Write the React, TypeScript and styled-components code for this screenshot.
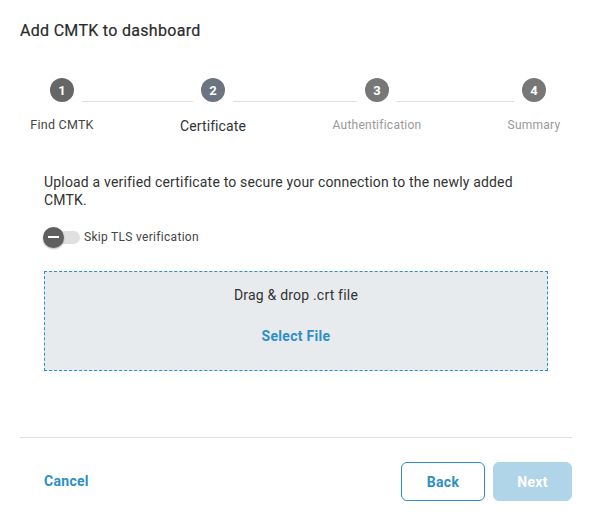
import React from 'react'
import styled, { createGlobalStyle } from 'styled-components'

const GlobalStyle = createGlobalStyle`
  body {
    margin: 0;
    background: #ffffff;
    font-family: Roboto, "Liberation Sans", sans-serif;
    color: #333333;
  }
`

const steps = [
  { num: 1, label: 'Find CMTK', state: 'done' },
  { num: 2, label: 'Certificate', state: 'active' },
  { num: 3, label: 'Authentification', state: 'todo' },
  { num: 4, label: 'Summary', state: 'todo' },
]

export default function App() {
  return (
    <Dialog>
      <GlobalStyle />
      <Title>Add CMTK to dashboard</Title>

      <Stepper>
        {steps.map((s, i) => (
          <React.Fragment key={s.num}>
            <Circle state={s.state}>{s.num}</Circle>
            {i < steps.length - 1 && <Connector />}
          </React.Fragment>
        ))}
        {steps.map((s, i) => (
          <LabelCell key={s.label} style={{ gridColumn: i * 2 + 1 }}>
            <StepLabel state={s.state}>{s.label}</StepLabel>
          </LabelCell>
        ))}
      </Stepper>

      <Body>
        <Intro>Upload a verified certificate to secure your connection to the newly added CMTK.</Intro>
        <ToggleRow>
          <Track>
            <Knob />
          </Track>
          <ToggleLabel>Skip TLS verification</ToggleLabel>
        </ToggleRow>
        <DropZone>
          <DropText>Drag &amp; drop .crt file</DropText>
          <LinkButton>Select File</LinkButton>
        </DropZone>
      </Body>

      <Footer>
        <LinkButton>Cancel</LinkButton>
        <Actions>
          <Button variant="outline">Back</Button>
          <Button variant="disabled">Next</Button>
        </Actions>
      </Footer>
    </Dialog>
  )
}

const Dialog = styled.div`
  width: 592px;
  height: 521px;
  box-sizing: border-box;
  padding: 20px 20px 0;
  display: flex;
  flex-direction: column;
`

const Title = styled.div`
  font-size: 16px;
  font-weight: 400;
  letter-spacing: 0.3px;
  color: #2b2b2b;
  line-height: 21px;
  -webkit-text-stroke: 0.2px #2b2b2b;
`

const Stepper = styled.div`
  display: grid;
  grid-template-columns: 24px 111px 24px 124px 24px 117px 24px;
  column-gap: 8px;
  row-gap: 15px;
  margin: 37px 0 0 30px;
`

const circleColors: Record<string, string> = {
  done: '#666666',
  active: '#6b7480',
  todo: '#777777',
}

const Circle = styled.div<{ state: string }>`
  width: 24px;
  height: 24px;
  border-radius: 50%;
  background: ${(p) => circleColors[p.state]};
  color: #ffffff;
  font-size: 13px;
  font-weight: 700;
  display: flex;
  align-items: center;
  justify-content: center;
`

const Connector = styled.div`
  align-self: end;
  height: 1px;
  background: #dddddd;
`

const LabelCell = styled.div`
  grid-row: 2;
  display: flex;
  justify-content: center;
  white-space: nowrap;
`

const labelColors: Record<string, string> = {
  done: '#444444',
  active: '#333333',
  todo: '#999999',
}

const StepLabel = styled.span<{ state: string }>`
  font-size: ${(p) => (p.state === 'active' ? '14px' : p.state === 'done' ? '12.5px' : '12px')};
  letter-spacing: ${(p) => (p.state === 'active' ? '0.1px' : '0.25px')};
  line-height: 16px;
  margin-top: ${(p) => (p.state === 'active' ? '1px' : '0')};
  color: ${(p) => labelColors[p.state]};
`

const Body = styled.div`
  padding: 0 24px;
  display: flex;
  flex-direction: column;
  margin-top: 39px;
  flex: 1;
`

const Intro = styled.p`
  margin: 0;
  font-size: 14px;
  letter-spacing: 0.18px;
  line-height: 18px;
  color: #333333;
`

const ToggleRow = styled.div`
  display: flex;
  align-items: center;
  gap: 4px;
  margin-top: 21px;
`

const Track = styled.div`
  width: 36px;
  height: 13px;
  border-radius: 7px;
  background: #e0e0e0;
  display: flex;
  align-items: center;
`

const Knob = styled.div`
  width: 21px;
  height: 21px;
  border-radius: 50%;
  background: #5f5f5f;
  box-shadow: 0 1px 2px rgba(0, 0, 0, 0.3);
  display: flex;
  align-items: center;
  justify-content: center;
  margin-left: -1px;
  &::after {
    content: '';
    width: 11px;
    height: 2px;
    background: #ffffff;
  }
`

const ToggleLabel = styled.span`
  font-size: 12px;
  letter-spacing: 0.3px;
  color: #444444;
`

const DropZone = styled.div`
  margin-top: 27px;
  height: 100px;
  box-sizing: border-box;
  border: 1px dashed #2a90cf;
  background: #e8ebee;
  display: flex;
  flex-direction: column;
  align-items: center;
  padding-top: 14px;
  gap: 23px;
`

const DropText = styled.div`
  font-size: 14px;
  letter-spacing: 0.2px;
  color: #333333;
  line-height: 18px;
`

const LinkButton = styled.button`
  border: none;
  background: none;
  padding: 0;
  font-family: inherit;
  font-size: 14px;
  letter-spacing: 0.3px;
  font-weight: 700;
  color: #2e8fc8;
  line-height: 18px;
  cursor: pointer;
`

const Footer = styled.div`
  border-top: 1px solid #dddddd;
  height: 84px;
  box-sizing: border-box;
  padding: 24px 0 0 24px;
  display: flex;
  justify-content: space-between;
  align-items: flex-start;
  ${LinkButton} {
    margin-top: 10px;
  }
`

const Actions = styled.div`
  display: flex;
  gap: 8px;
`

const Button = styled.button<{ variant: 'outline' | 'disabled' }>`
  height: 39px;
  border-radius: 6px;
  font-family: inherit;
  font-size: 14px;
  letter-spacing: 0.3px;
  font-weight: 700;
  width: ${(p) => (p.variant === 'outline' ? '84px' : '79px')};
  border: 1px solid ${(p) => (p.variant === 'outline' ? '#2e8fc8' : '#b0d4e8')};
  background: ${(p) => (p.variant === 'outline' ? '#ffffff' : '#b0d4e8')};
  color: ${(p) => (p.variant === 'outline' ? '#2e8fc8' : '#ffffff')};
`
